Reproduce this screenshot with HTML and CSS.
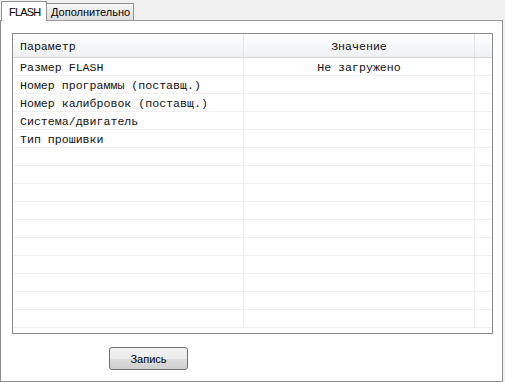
FILE: index.html
```html
<!DOCTYPE html>
<html lang="ru">
<head>
  <meta charset="UTF-8">
  <title>FLASH</title>
  <link rel="stylesheet" href="styles.css">
</head>
<body>

<div class="tabs">
  <div class="tab active">FLASH</div>
  <div class="tab">Дополнительно</div>
</div>

<div class="panel">
  <div class="grid">
    <div class="row head">
      <div class="cell">Параметр</div>
      <div class="cell center">Значение</div>
      <div class="cell"></div>
    </div>
    <div class="row">
      <div class="cell">Размер FLASH</div>
      <div class="cell center">Не загружено</div>
      <div class="cell"></div>
    </div>
    <div class="row">
      <div class="cell">Номер программы (поставщ.)</div>
      <div class="cell"></div>
      <div class="cell"></div>
    </div>
    <div class="row">
      <div class="cell">Номер калибровок (поставщ.)</div>
      <div class="cell"></div>
      <div class="cell"></div>
    </div>
    <div class="row">
      <div class="cell">Система/двигатель</div>
      <div class="cell"></div>
      <div class="cell"></div>
    </div>
    <div class="row">
      <div class="cell">Тип прошивки</div>
      <div class="cell"></div>
      <div class="cell"></div>
    </div>
    <div class="row"><div class="cell"></div><div class="cell"></div><div class="cell"></div></div>
    <div class="row"><div class="cell"></div><div class="cell"></div><div class="cell"></div></div>
    <div class="row"><div class="cell"></div><div class="cell"></div><div class="cell"></div></div>
    <div class="row"><div class="cell"></div><div class="cell"></div><div class="cell"></div></div>
    <div class="row"><div class="cell"></div><div class="cell"></div><div class="cell"></div></div>
    <div class="row"><div class="cell"></div><div class="cell"></div><div class="cell"></div></div>
    <div class="row"><div class="cell"></div><div class="cell"></div><div class="cell"></div></div>
    <div class="row"><div class="cell"></div><div class="cell"></div><div class="cell"></div></div>
    <div class="row"><div class="cell"></div><div class="cell"></div><div class="cell"></div></div>
    <div class="row"><div class="cell"></div><div class="cell"></div><div class="cell"></div></div>
  </div>

  <div class="actions">
    <button class="btn">Запись</button>
  </div>
</div>

</body>
</html>
```

FILE: styles.css
```css
/* Basic reset */
html, body {
  margin: 0;
  padding: 0;
}

*, *::before, *::after {
  box-sizing: border-box;
}

body {
  background: #f0f0f0;
  font-family: 'Liberation Sans', Arial, sans-serif;
  font-size: 11px;
  color: #000;
  width: 505px;
  height: 382px;
  overflow: hidden;
}

/* Tabs */
.tabs {
  display: flex;
  align-items: flex-end;
  height: 20px;
  padding-left: 1px;
}

.tab {
  height: 17px;
  padding: 0 3px 0 4px;
  line-height: 17px;
  border: 1px solid #919191;
  border-left: none;
  border-bottom: none;
  background: linear-gradient(#f6f6f6, #dedede);
  color: #000;
}

.tab.active {
  position: relative;
  z-index: 1;
  width: 46px;
  height: 20px;
  margin-bottom: -1px;
  padding: 3px 0 0 7px;
  line-height: 15px;
  font-size: 11px;
  letter-spacing: -0.8px;
  background: #fff;
  border-left: 1px solid #919191;
}

/* Panel */
.panel {
  width: 503px;
  height: 362px;
  background: #fff;
  border: 1px solid #8d8d8d;
  border-top-color: #9a9a9a;
  padding: 12px 0 0 11px;
}

/* Parameter table */
.grid {
  width: 481px;
  height: 301px;
  border: 1px solid #8b8b8b;
  overflow: hidden;
  font-family: 'Liberation Mono', 'Courier New', monospace;
  font-size: 11.6px;
  color: #111;
}

.row {
  display: grid;
  grid-template-columns: 231px 231px 1fr;
  height: 18px;
  border-bottom: 1px solid #f0f0f0;
}

.row .cell {
  border-right: 1px solid #f0f0f0;
  padding-left: 7px;
  line-height: 19px;
  white-space: nowrap;
  overflow: hidden;
}

.row .cell:last-child {
  border-right: none;
}

.row .center {
  text-align: center;
  padding-left: 0;
}

.row.head {
  height: 24px;
  border-bottom: 1px solid #d5d5d5;
  background: linear-gradient(#ffffff, #f7f8fa 50%, #eef0f2);
}

.row.head .cell {
  line-height: 26px;
  border-right-color: #e3e4e6;
}

/* Button */
.actions {
  padding: 13px 0 0 97px;
}

.btn {
  width: 79px;
  height: 23px;
  padding: 0;
  font-family: 'Liberation Sans', Arial, sans-serif;
  font-size: 11px;
  color: #000;
  border: 1px solid #707070;
  border-radius: 3px;
  background: linear-gradient(#f2f2f2, #ebebeb 50%, #dddddd 51%, #cfcfcf);
}
```
